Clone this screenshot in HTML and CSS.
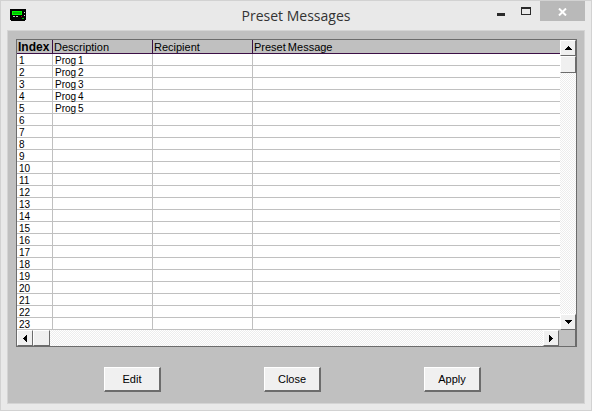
FILE: index.html
```html
<!DOCTYPE html>
<html lang="en">
<head>
<meta charset="utf-8">
<title>Preset Messages</title>
<link rel="stylesheet" href="styles.css">
</head>
<body>
<div class="window">
  <header class="titlebar">
    <svg class="app-icon" width="16" height="12" viewBox="0 0 16 12" shape-rendering="crispEdges">
      <rect x="0" y="0" width="16" height="11" fill="#000"/>
      <rect x="1" y="11" width="14" height="1" fill="#000"/>
      <rect x="2" y="2" width="10" height="4" fill="#00ff00"/>
      <rect x="3" y="3" width="8" height="2" fill="#00c000"/>
      <rect x="3" y="7" width="2" height="1" fill="#c0c0c0"/>
      <rect x="6" y="7" width="2" height="1" fill="#c0c0c0"/>
      <rect x="14" y="3" width="1" height="1" fill="#e0e0e0"/>
      <rect x="14" y="6" width="1" height="1" fill="#e0e0e0"/>
      <rect x="11" y="7" width="1" height="1" fill="#c00000"/>
      <rect x="12" y="9" width="2" height="1" fill="#00c000"/>
    </svg>
    <h1 class="title">Preset Messages</h1>
    <div class="controls">
      <span class="ctl ctl-min"><svg width="8" height="3" shape-rendering="crispEdges"><rect width="8" height="3" fill="#2a2a2a"/></svg></span>
      <span class="ctl ctl-max"><svg width="10" height="8" shape-rendering="crispEdges"><rect x="0.5" y="0.5" width="9" height="7" fill="none" stroke="#2a2a2a"/><rect width="10" height="2" fill="#2a2a2a"/></svg></span>
      <span class="ctl ctl-close"><svg width="9" height="8" viewBox="0 0 9 8"><path d="M1 .5 8 7.5M8 .5 1 7.5" stroke="#fff" stroke-width="2" fill="none"/></svg></span>
    </div>
  </header>
  <main class="client">
    <div class="grid">
      <div class="grid-body">
        <table class="table">
          <colgroup><col class="c-index"><col class="c-desc"><col class="c-rec"><col></colgroup>
          <thead><tr><th class="th-index">Index</th><th>Description</th><th>Recipient</th><th>Preset Message</th></tr></thead>
          <tbody>
            <tr><td>1</td><td>Prog 1</td><td></td><td></td></tr>
            <tr><td>2</td><td>Prog 2</td><td></td><td></td></tr>
            <tr><td>3</td><td>Prog 3</td><td></td><td></td></tr>
            <tr><td>4</td><td>Prog 4</td><td></td><td></td></tr>
            <tr><td>5</td><td>Prog 5</td><td></td><td></td></tr>
            <tr><td>6</td><td></td><td></td><td></td></tr>
            <tr><td>7</td><td></td><td></td><td></td></tr>
            <tr><td>8</td><td></td><td></td><td></td></tr>
            <tr><td>9</td><td></td><td></td><td></td></tr>
            <tr><td>10</td><td></td><td></td><td></td></tr>
            <tr><td>11</td><td></td><td></td><td></td></tr>
            <tr><td>12</td><td></td><td></td><td></td></tr>
            <tr><td>13</td><td></td><td></td><td></td></tr>
            <tr><td>14</td><td></td><td></td><td></td></tr>
            <tr><td>15</td><td></td><td></td><td></td></tr>
            <tr><td>16</td><td></td><td></td><td></td></tr>
            <tr><td>17</td><td></td><td></td><td></td></tr>
            <tr><td>18</td><td></td><td></td><td></td></tr>
            <tr><td>19</td><td></td><td></td><td></td></tr>
            <tr><td>20</td><td></td><td></td><td></td></tr>
            <tr><td>21</td><td></td><td></td><td></td></tr>
            <tr><td>22</td><td></td><td></td><td></td></tr>
            <tr><td>23</td><td></td><td></td><td></td></tr>
          </tbody>
        </table>
        <div class="vscroll">
          <span class="sb-btn"><svg width="7" height="4" shape-rendering="crispEdges"><path d="M3 0h1v1h1v1h1v1h1v1H0V3h1V2h1V1h1z"/></svg></span>
          <span class="sb-btn sb-thumb-v"></span>
          <span class="sb-track"></span>
          <span class="sb-btn"><svg width="7" height="4" shape-rendering="crispEdges"><path d="M0 0h7v1H6v1H5v1H4v1H3V3H2V2H1V1H0z"/></svg></span>
        </div>
      </div>
      <div class="hscroll">
        <span class="sb-btn"><svg width="4" height="7" shape-rendering="crispEdges"><path d="M4 0v7H3V6H2V5H1V4H0V3h1V2h1V1h1V0z"/></svg></span>
        <span class="sb-btn sb-thumb-h"></span>
        <span class="sb-track"></span>
        <span class="sb-btn"><svg width="4" height="7" shape-rendering="crispEdges"><path d="M0 0h1v1h1v1h1v1h1v1H3v1H2v1H1v1H0z"/></svg></span>
        <span class="sb-corner"></span>
      </div>
    </div>
    <div class="actions">
      <button class="btn" type="button">Edit</button>
      <button class="btn" type="button">Close</button>
      <button class="btn" type="button">Apply</button>
    </div>
  </main>
</div>
</body>
</html>
```
FILE: styles.css
```css
* { box-sizing: border-box; }
html, body { margin: 0; padding: 0; }
body { width: 592px; height: 411px; overflow: hidden; font-family: "Liberation Sans", Arial, sans-serif; }
.window {
  width: 592px; height: 411px;
  background: #e9e9e9;
  border: 1px solid #d2d2d2;
  display: flex; flex-direction: column;
  padding: 0 6px 6px;
}
.titlebar { height: 29px; flex: none; display: flex; align-items: flex-start; position: relative; }
.app-icon { margin: 8px 0 0 3px; }
.title {
  position: absolute; left: 0; right: 0; top: 5px; margin: 0;
  text-align: center;
  font: 400 14px/20px "Open Sans", sans-serif;
  color: #333;
}
.controls { position: absolute; top: 0; left: 481px; display: flex; }
.ctl { display: flex; justify-content: center; height: 20px; }
.ctl-min { width: 25px; padding-top: 12px; }
.ctl-max { width: 26px; padding-top: 6px; }
.ctl-close { width: 45px; background: #b9b9b9; padding-top: 7px; margin-left: 1px; }
.client {
  flex: 1; background: #c0c0c0; border: 1px solid #d4d4d4;
  padding: 8px 7px 0 8px;
  display: flex; flex-direction: column;
}
.grid {
  width: 561px; height: 308px; flex: none;
  border: 1px solid #6c6c6c;
  border-width: 1px 2px 2px 1px;
  display: flex; flex-direction: column;
  background: #fff;
}
.grid-body { display: flex; height: 290px; flex: none; }
.table {
  width: 543px; height: 290px; table-layout: fixed;
  border-collapse: separate; border-spacing: 0;
  font-size: 10px; color: #000;
  flex: none;
}
.c-index { width: 36px; }
.c-desc { width: 100px; }
.c-rec { width: 100px; }
.table th {
  height: 14px; padding: 2px 0 0 1px;
  background: #c0c0c0;
  font-weight: 400; text-align: left; font-size: 11px; line-height: 11px;
  word-spacing: -1px;
  border-right: 1px solid #3c0f46;
  border-bottom: 1px solid #3c0f46;
}
.table th:last-child { border-right: 0; }
.table .th-index { font-weight: 700; font-size: 12px; }
.table td {
  height: 12px; padding: 2px 0 0 2px;
  line-height: 9px; white-space: nowrap;
  word-spacing: -1px;
  background: #fff;
  border-right: 1px solid #c0c0c0;
  border-bottom: 1px solid #c0c0c0;
}
.table td:last-child { border-right: 0; }
.vscroll { width: 16px; flex: none; display: flex; flex-direction: column; }
.hscroll { height: 16px; flex: none; display: flex; }
.sb-btn {
  width: 16px; height: 16px; flex: none;
  display: flex; align-items: center; justify-content: center;
  background: #f0f0f0;
  border-style: solid; border-width: 1px;
  border-color: #fff #6c6c6c #6c6c6c #fff;
}
.sb-thumb-h { width: 17px; }
.sb-thumb-v { height: 17px; }
.sb-track {
  flex: 1;
  background: repeating-conic-gradient(#ededed 0 25%, #fff 0 50%) 0 0 / 2px 2px;
}
.sb-corner { width: 16px; flex: none; background: #c0c0c0; }
.actions { display: flex; gap: 103px; padding: 20px 0 0 88px; }
.btn {
  width: 57px; height: 25px; padding: 0;
  background: #f0f0f0;
  border-style: solid; border-width: 1px 2px 2px 1px;
  border-color: #fff #6c6c6c #6c6c6c #fff;
  font: 400 11px/1 "Liberation Sans", Arial, sans-serif;
  color: #000;
}
```
